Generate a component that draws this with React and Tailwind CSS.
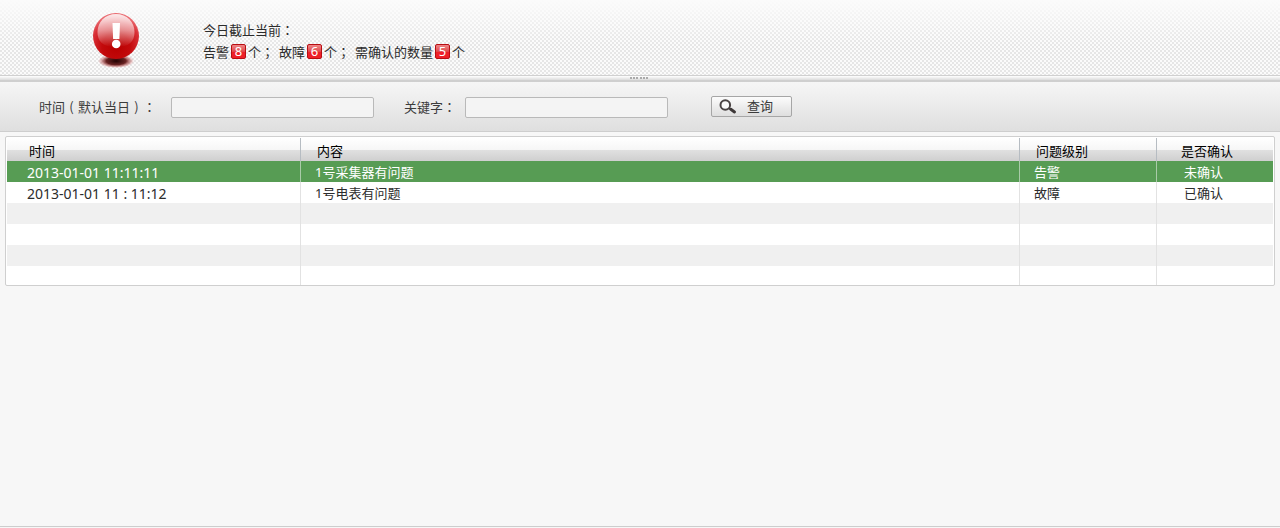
import React from 'react';

const records = [
  { time: '2013-01-01 11:11:11', content: '1号采集器有问题', level: '告警', confirmed: '未确认' },
  { time: '2013-01-01 11 : 11:12', content: '1号电表有问题', level: '故障', confirmed: '已确认' },
  null,
  null,
  null,
  null,
];

function Punct({ children }) {
  return (
    <span className="inline-block w-[13px] text-center font-['Noto_Sans_CJK_TC',sans-serif] leading-none">
      {children}
    </span>
  );
}

function Badge({ children }) {
  return (
    <span className="mx-0.5 mt-[3px] flex h-[15px] w-[15px] items-center justify-center rounded-xs border border-[#b80d12] bg-linear-to-b from-[#ee8587] from-0% via-[#e0474b] via-50% to-[#ee2028] to-55% text-[13px] leading-none text-white">
      {children}
    </span>
  );
}

function AlertIcon() {
  return (
    <svg width="50" height="60" viewBox="0 0 50 60" aria-hidden="true">
      <defs>
        <radialGradient id="ball" cx="50%" cy="74%" r="68%">
          <stop offset="0" stopColor="#b80000" />
          <stop offset="0.45" stopColor="#c30a0c" />
          <stop offset="0.8" stopColor="#d93138" />
          <stop offset="1" stopColor="#e9686e" />
        </radialGradient>
        <linearGradient id="shine" x1="0" y1="0" x2="0" y2="1">
          <stop offset="0" stopColor="#fff" stopOpacity="0.85" />
          <stop offset="0.5" stopColor="#fff" stopOpacity="0.5" />
          <stop offset="1" stopColor="#fff" stopOpacity="0" />
        </linearGradient>
        <radialGradient id="shadow">
          <stop offset="0" stopColor="#210000" />
          <stop offset="0.55" stopColor="#5a0c0c" stopOpacity="0.9" />
          <stop offset="1" stopColor="#d44" stopOpacity="0" />
        </radialGradient>
      </defs>
      <ellipse cx="25" cy="50" rx="18" ry="7" fill="url(#shadow)" />
      <circle cx="25" cy="25" r="23" fill="url(#ball)" />
      <path d="M25 3C14 3 6.500 11 6.500 21c0 9 5 15 18.500 15s18.500-6 18.500-15C43.500 11 36 3 25 3z" fill="url(#shine)" />
      <path d="M21.500 12h7.500l-.6 16h-6.300z" fill="#fff" />
      <circle cx="25.200" cy="33" r="4.300" fill="#fff" />
    </svg>
  );
}

function SearchIcon() {
  return (
    <svg width="18" height="15" viewBox="0 0 18 15" aria-hidden="true">
      <circle cx="6.300" cy="6" r="4.800" fill="#fafafa" stroke="#4a4444" strokeWidth="2" />
      <path d="M9.800 9l2 1.400" stroke="#4a4444" strokeWidth="1.800" />
      <path d="M11.800 10.300l3.700 2.600" stroke="#3d3838" strokeWidth="3" strokeLinecap="round" />
    </svg>
  );
}

function Summary() {
  return (
    <header className="border-b border-[#d0d0d0] bg-[linear-gradient(#fbfbfb,#fbfbfb00_60%),conic-gradient(#e6e6e6_25%,#fbfbfb_0_50%,#e6e6e6_0_75%,#fbfbfb_0)] bg-[length:100%_100%,4px_4px]">
      <div className="flex h-[75px] items-start pt-[11px] pl-[91px]">
        <AlertIcon />
        <div className="pt-2 pl-[62px] leading-[22px]">
          <p>今日截止当前<Punct>：</Punct></p>
          <p className="flex items-start">
            告警<Badge>8</Badge>个<span><Punct>；</Punct></span>
            <span className="ml-[5px]">故障</span><Badge>6</Badge>个<span><Punct>；</Punct></span>
            <span className="ml-[5px]">需确认的数量</span><Badge>5</Badge>个
          </p>
        </div>
      </div>
    </header>
  );
}

function Splitter() {
  return (
    <div className="flex h-[6px] items-start justify-center gap-px border-b-2 border-[#cfcfcf] bg-linear-to-b from-white to-[#dcdcdc] pt-px pr-0.5">
      <i className="h-0.5 w-0.5 bg-[#aaa]" />
      <i className="h-0.5 w-0.5 bg-[#aaa]" />
      <i className="mr-px h-0.5 w-0.5 bg-[#aaa]" />
      <i className="h-0.5 w-0.5 bg-[#aaa]" />
      <i className="h-0.5 w-0.5 bg-[#aaa]" />
      <i className="h-0.5 w-0.5 bg-[#aaa]" />
    </div>
  );
}

function Filters() {
  const field = 'mt-px h-[21px] w-[203px] rounded-[2px] border border-[#b9b9b9] bg-[#f4f4f4] px-2 outline-none';
  return (
    <form
      onSubmit={(e) => e.preventDefault()}
      className="flex h-[50px] items-start border-b border-[#cecece] bg-linear-to-b from-[#f6f6f6] to-[#dfdfdf] pt-[14px] pl-[39px] text-[#3c3c3c]"
    >
      <label htmlFor="time" className="mt-px w-[132px] leading-[21px]">
        时间<Punct>(</Punct>默认当日<Punct>)</Punct><Punct>：</Punct>
      </label>
      <input id="time" type="text" className={field} />
      <label htmlFor="keyword" className="mt-px ml-[30px] w-[61px] leading-[21px]">
        关键字<Punct>：</Punct>
      </label>
      <input id="keyword" type="text" className={field} />
      <button
        type="submit"
        className="ml-[43px] flex h-[21px] w-[81px] items-center gap-2.5 rounded-[2px] border border-[#a6a6a6] bg-linear-to-b from-[#fcfcfc] to-[#dedede] pl-[7px]"
      >
        <SearchIcon />
        查询
      </button>
    </form>
  );
}

function Records() {
  const head = 'h-[23px] pt-1 pb-px text-left align-middle font-normal leading-[18px]';
  return (
    <div className="mx-[5px] mt-[4px] rounded-[2px] border border-[#cfcfcf] bg-white p-px pb-0">
      <table className="w-full table-fixed border-separate border-spacing-0">
        <colgroup>
          <col className="w-[294px]" />
          <col />
          <col className="w-[137px]" />
          <col className="w-[116px]" />
        </colgroup>
        <thead>
          <tr className="bg-[linear-gradient(#ffffff,#f6f6f6_52%,#e0e0e0_53%,#cfcfcf)] text-black">
            <th scope="col" className={`${head} border-r border-[#b6bcc2] pl-[22px]`}>时间</th>
            <th scope="col" className={`${head} border-r border-[#b6bcc2] pl-4`}>内容</th>
            <th scope="col" className={`${head} border-r border-[#b6bcc2] pl-4`}>问题级别</th>
            <th scope="col" className={`${head} pl-6`}>是否确认</th>
          </tr>
        </thead>
        <tbody>
          {records.map((r, i) => {
            const row = i === 0 ? 'bg-[#579c54] text-white' : i % 2 === 0 ? 'bg-[#f0f0f0]' : 'bg-white';
            const line = i === 0 ? 'border-r border-[#a9cba8]' : 'border-r border-[#e2e2e2]';
            const height = i === records.length - 1 ? 'h-[19px]' : 'h-[21px]';
            return (
              <tr key={i} className={row}>
                <td className={`${height} ${line} p-0 pl-5 pt-0.5 text-[14px] leading-[19px]`}>{r?.time}</td>
                <td className={`${height} ${line} p-0 pl-3.5 pt-0.5 leading-[19px]`}>{r?.content}</td>
                <td className={`${height} ${line} p-0 pl-3.5 pt-0.5 leading-[19px]`}>{r?.level}</td>
                <td className={`${height} p-0 pl-[27px] pt-0.5 leading-[19px]`}>{r?.confirmed}</td>
              </tr>
            );
          })}
        </tbody>
      </table>
    </div>
  );
}

export default function App() {
  return (
    <div className="flex min-h-screen flex-col bg-[#f7f7f7] pb-px font-['Noto_Sans','Noto_Sans_CJK_SC',sans-serif] text-[13px] text-[#2c2c2c]">
      <Summary />
      <Splitter />
      <main className="grow border-b border-[#cdcdcd]">
        <Filters />
        <Records />
      </main>
    </div>
  );
}
